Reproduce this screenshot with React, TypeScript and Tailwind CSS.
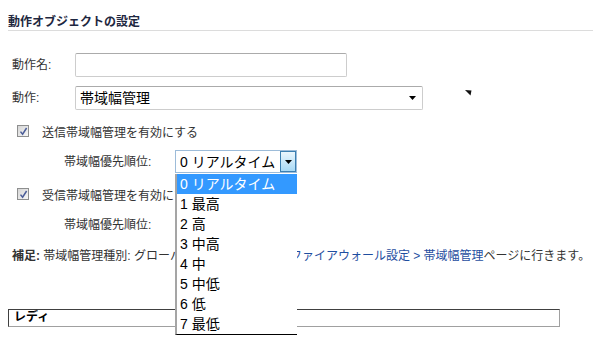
import React from "react";

const options = ["0 リアルタイム", "1 最高", "2 高", "3 中高", "4 中", "5 中低", "6 低", "7 最低"];

function Check() {
  return (
    <span className="flex h-[12px] w-[12px] shrink-0 items-center justify-center border border-[#8e8f8f] bg-gradient-to-br from-[#d6d6d6] to-[#f7f7f7]">
      <svg width="9" height="9" viewBox="0 0 9 9">
        <path d="M1.5 4.6 L3.6 7.2 L7.6 1" fill="none" stroke="#4b5d98" strokeWidth="1.5" />
      </svg>
    </span>
  );
}

function PrioritySelect({ open }: { open?: boolean }) {
  return (
    <div className="relative">
      <div className="flex h-[23px] w-[122px] items-center border border-[#9dbcd9] bg-white">
        <span className="flex-1 pl-[4px] text-[14px] leading-[20px] text-black">0 リアルタイム</span>
        <span className="flex h-[21px] w-[16px] items-center justify-center border border-[#3c7fb1] bg-gradient-to-b from-[#eaf6fd] to-[#a7d9f5]">
          <svg width="7" height="4" viewBox="0 0 7 4">
            <path d="M0 0 H7 L3.5 4 Z" fill="#000" />
          </svg>
        </span>
      </div>
      {open && (
        <div className="absolute left-0 top-[24px] z-10 w-[122px] border-b border-l-2 border-b-black border-l-[#a5a5a5] bg-white">
          {options.map((o, i) => (
            <div
              key={o}
              className={
                i === 0
                  ? "h-[20px] bg-[#3399ff] pl-[3px] text-[14px] leading-[20px] text-white"
                  : "h-[20px] pl-[3px] text-[14px] leading-[20px] text-black"
              }
            >
              {o}
            </div>
          ))}
        </div>
      )}
    </div>
  );
}

export default function App() {
  return (
    <div className="relative h-[340px] w-[601px] overflow-hidden bg-white font-['Liberation_Sans','Noto_Sans_CJK_JP',sans-serif] text-[12px] text-[#333]">
      <div className="px-2 pt-[14px]">
        <h2 className="border-b border-[#dcdcdc] text-[12px] font-bold leading-[16px] text-[#1e2740]">
          動作オブジェクトの設定
        </h2>
      </div>

      <div className="mt-[22px] flex h-[24px] items-center pl-[12px]">
        <span className="w-[63px] leading-[16px]">動作名:</span>
        <div className="h-[24px] w-[272px] rounded-[2px] border border-[#cdcdcd] border-t-[#ababab] bg-white" />
      </div>

      <div className="mt-[9px] flex h-[24px] items-center pl-[12px]">
        <span className="w-[63px] leading-[16px]">動作:</span>
        <div className="flex h-[24px] w-[348px] items-center rounded-[2px] border border-[#cdcdcd] border-t-[#ababab] bg-white">
          <span className="flex-1 pl-[4px] text-[14px] leading-[20px] text-black">帯域幅管理</span>
          <svg className="mr-[6px]" width="7" height="4" viewBox="0 0 7 4">
            <path d="M0 0 H7 L3.5 4 Z" fill="#000" />
          </svg>
        </div>
        <svg className="ml-[42px] -mt-[10px]" width="7" height="6" viewBox="0 0 7 6">
          <path d="M0 0 L6.5 0.5 L5.5 5.5 Z" fill="#111" />
        </svg>
      </div>

      <div className="mt-[13px] flex h-[20px] items-center pl-[17px]">
        <span className="-mt-[4px]">
          <Check />
        </span>
        <span className="ml-[13px] leading-[16px]">送信帯域幅管理を有効にする</span>
      </div>

      <div className="mt-[7px] flex h-[23px] items-center pl-[64px]">
        <span className="w-[111px] leading-[16px]">帯域幅優先順位:</span>
        <div className="relative z-10">
          <PrioritySelect open />
        </div>
      </div>

      <div className="mt-[13px] flex h-[20px] items-center pl-[17px]">
        <span className="-mt-[4px]">
          <Check />
        </span>
        <span className="ml-[13px] leading-[16px]">受信帯域幅管理を有効にする</span>
      </div>

      <div className="mt-[7px] flex h-[23px] items-center pl-[64px]">
        <span className="w-[111px] leading-[16px]">帯域幅優先順位:</span>
        <PrioritySelect />
      </div>

      <p className="mt-[12px] h-[16px] whitespace-nowrap pl-[12px] leading-[16px]">
        <span className="font-bold">補足:</span> 帯域幅管理種別: グローバル。変更するには、
        <span className="text-[#1f4ea0]">ファイアウォール設定 &gt; 帯域幅管理</span>
        ページに行きます。
      </p>

      <div className="mx-2 mt-[45px] h-[18px] w-[552px] border border-b-[#a0a0a0] border-l-[#404040] border-r-[#a0a0a0] border-t-[#404040] pl-[5px] text-[12px] font-bold leading-[15px] text-black">
        レディ
      </div>
    </div>
  );
}
